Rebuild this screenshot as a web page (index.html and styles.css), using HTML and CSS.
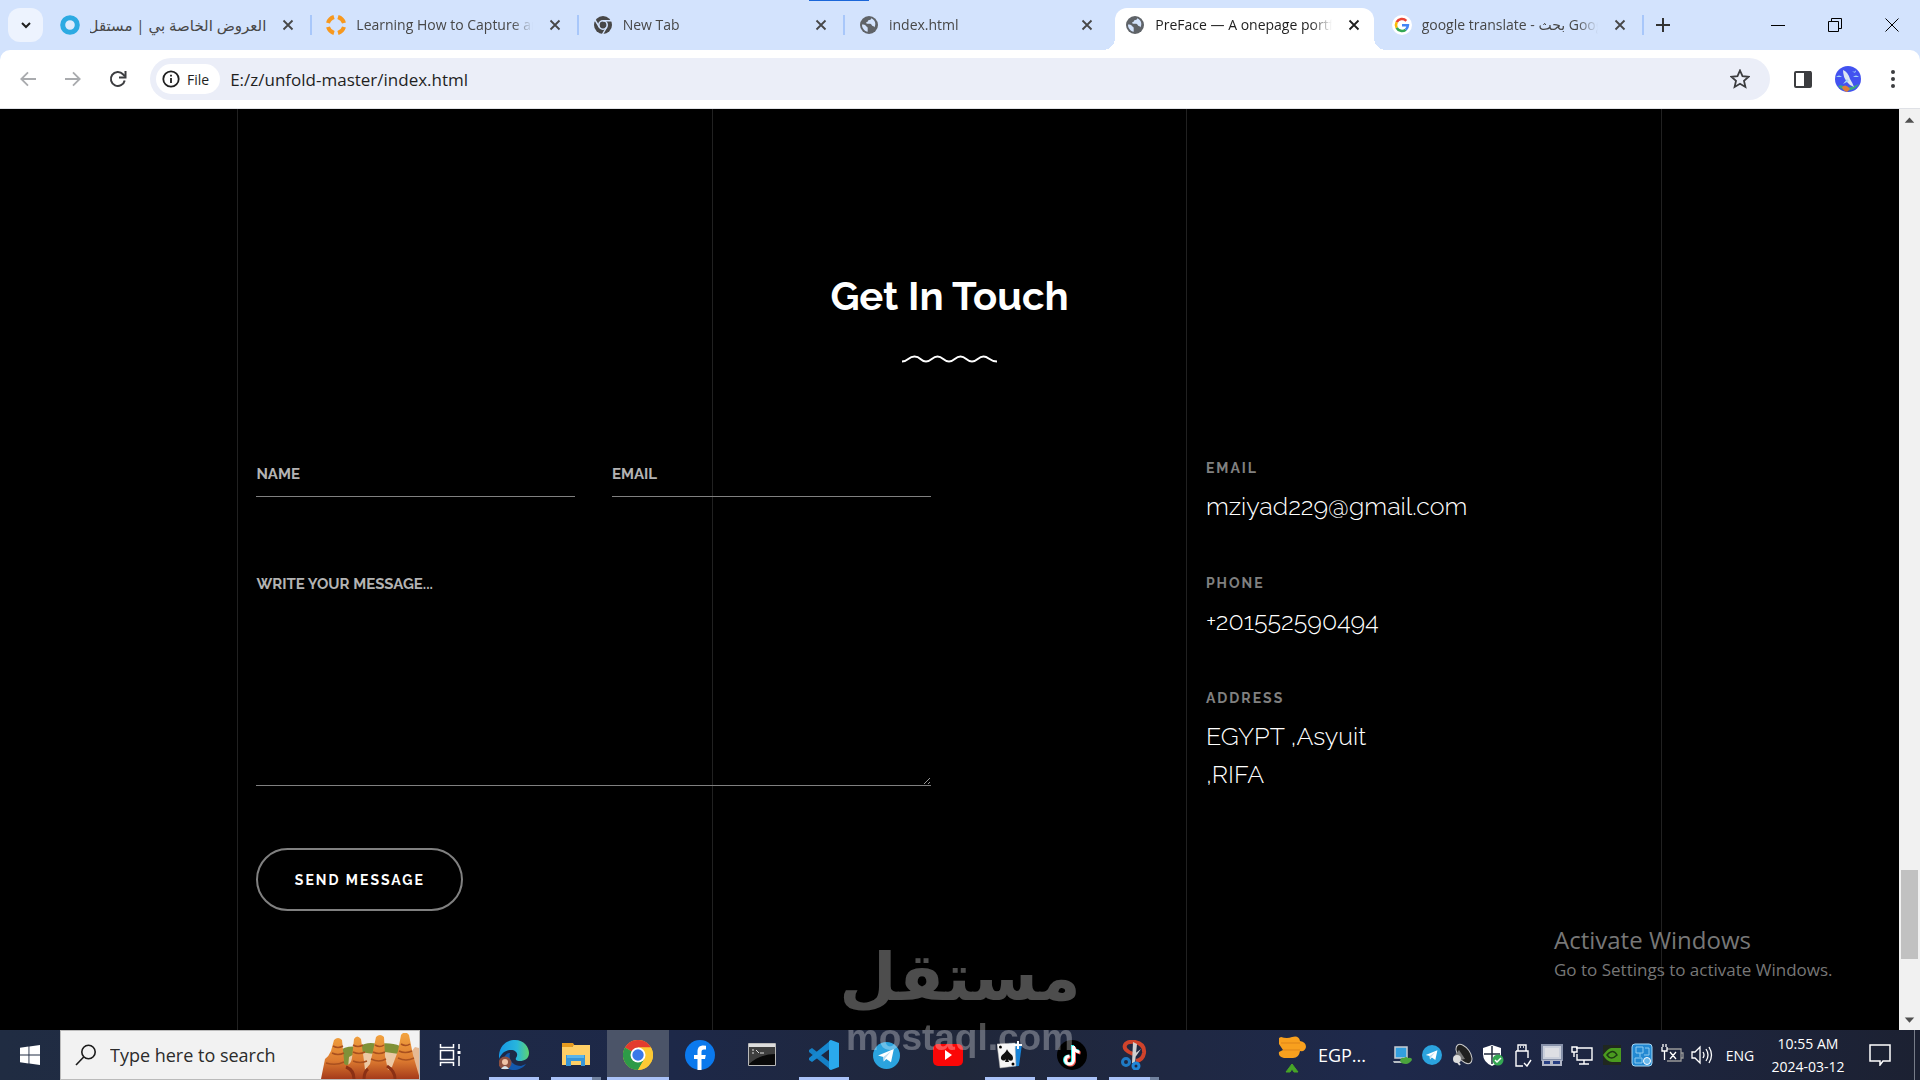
FILE: index.html
```html
<!DOCTYPE html>
<html lang="en">
<head>
  <meta charset="UTF-8">
  <title>PreFace — A onepage portfolio</title>
  <link rel="stylesheet" href="styles.css">
</head>
<body>

  <!-- shared icons -->
  <svg class="sprite" aria-hidden="true">
    <symbol id="i-close" viewBox="0 0 12 12"><path d="M1.500 1.500l9 9M10.500 1.500l-9 9" stroke="currentColor" stroke-width="1.800" fill="none"/></symbol>
    <symbol id="i-globe" viewBox="0 0 20 20">
      <circle cx="10" cy="10" r="9" fill="#5f6368"/>
      <path d="M3 9.500c1.500 0 3.500.3 4 1.500.4 1 1.700.6 1.700 1.900v3.800C5.500 16.200 2.900 13.300 3 9.500z" fill="#d3e3fd"/>
      <path d="M12.200 3.300c0 1.700-1.500 1.700-2.600 1.900-1 .2-.4 1.700-1.700 1.900-1.200.2-.8 1.600.4 1.700h3c1.400.2 1.200 1.900 2.400 2.100 1 .2 1.700.4 1.700 1.600 1.900-3.300 1-7.500-3.200-9.200z" fill="#d3e3fd"/>
    </symbol>
    <symbol id="i-telegram" viewBox="0 0 24 24">
      <circle cx="12" cy="12" r="12" fill="#2ba3de"/>
      <path d="M4.500 12L18.500 6.300 16 18l-4.200-3-2.200 2.300-.4-4z" fill="#fff"/>
      <path d="M9.200 13.300l6.800-5-5 6-1.400 3z" fill="#bcdcf0"/>
    </symbol>
  </svg>

  <header class="tab-strip">
    <button class="tab-search" aria-label="Search tabs">
      <svg width="12" height="12" viewBox="0 0 12 12"><path d="M2 4l4 4 4-4" fill="none" stroke="#1f1f1f" stroke-width="2"/></svg>
    </button>

    <nav class="tabs">
      <div class="tab">
        <svg class="favicon" viewBox="0 0 20 20"><circle cx="10" cy="10" r="7.300" fill="#dcebfd" stroke="#2caae2" stroke-width="5"/></svg>
        <a class="tab-title" href="#" dir="rtl" lang="ar">العروض الخاصة بي | مستقل</a>
        <button class="tab-close" aria-label="Close tab"><svg><use href="#i-close"/></svg></button>
      </div>
      <div class="tab">
        <svg class="favicon" viewBox="0 0 20 20"><g fill="none" stroke="#f7981d" stroke-width="4"><path d="M2 8a9 9 0 0 1 6-6M12 2a9 9 0 0 1 6 6M18 12a9 9 0 0 1-6 6M8 18a9 9 0 0 1-6-6"/></g></svg>
        <a class="tab-title" href="#">Learning How to Capture and Record</a>
        <button class="tab-close" aria-label="Close tab"><svg><use href="#i-close"/></svg></button>
      </div>
      <div class="tab">
        <svg class="favicon" viewBox="0 0 20 20"><circle cx="10" cy="10" r="9" fill="#474747"/><circle cx="10" cy="10" r="4.200" fill="none" stroke="#d3e3fd" stroke-width="1.600"/><path d="M10 5.800h8.500M6.300 12L2 4.800M13.700 12l-4.300 7.500" stroke="#d3e3fd" stroke-width="1.500"/></svg>
        <a class="tab-title" href="#">New Tab</a>
        <button class="tab-close" aria-label="Close tab"><svg><use href="#i-close"/></svg></button>
      </div>
      <div class="tab loading">
        <svg class="favicon"><use href="#i-globe"/></svg>
        <a class="tab-title" href="#">index.html</a>
        <button class="tab-close" aria-label="Close tab"><svg><use href="#i-close"/></svg></button>
      </div>
      <div class="tab active">
        <svg class="favicon"><use href="#i-globe"/></svg>
        <a class="tab-title" href="#">PreFace — A onepage portfolio</a>
        <button class="tab-close" aria-label="Close tab"><svg><use href="#i-close"/></svg></button>
      </div>
      <div class="tab">
        <svg class="favicon" viewBox="0 0 20 20"><circle cx="10" cy="10" r="10" fill="#fff"/><g fill="none" stroke-width="2.600"><path d="M4.700 7.200a6 6 0 0 1 9.600-1.400" stroke="#ea4335"/><path d="M4.700 7.200a6 6 0 0 0 0 5.600" stroke="#fbbc05"/><path d="M4.700 12.800a6 6 0 0 0 9 1.900" stroke="#34a853"/><path d="M13.700 14.700a6 6 0 0 0 2.200-4.400H10" stroke="#4285f4"/></g></svg>
        <a class="tab-title" href="#">google translate - بحث Google</a>
        <button class="tab-close" aria-label="Close tab"><svg><use href="#i-close"/></svg></button>
      </div>
    </nav>

    <button class="new-tab" aria-label="New tab">
      <svg width="14" height="14" viewBox="0 0 14 14"><path d="M7 0v14M0 7h14" stroke="#333" stroke-width="2"/></svg>
    </button>

    <div class="window-buttons">
      <button aria-label="Minimize"><svg width="14" height="14" viewBox="0 0 14 14"><path d="M0 7.500h14" stroke="#000"/></svg></button>
      <button aria-label="Restore"><svg width="14" height="14" viewBox="0 0 14 14"><path d="M.5 3.500h10v10H.5zM3.500 3.500v-3h10v10h-3" fill="none" stroke="#000"/></svg></button>
      <button aria-label="Close"><svg width="14" height="14" viewBox="0 0 14 14"><path d="M.5.5l13 13M13.500.5l-13 13" stroke="#000"/></svg></button>
    </div>
  </header>

  <div class="toolbar">
    <div class="nav-buttons">
      <button aria-label="Back"><svg width="16" height="16" viewBox="0 0 16 16"><path d="M16 8H1.500M8 1.300L1.300 8 8 14.700" fill="none" stroke="#a9abae" stroke-width="1.800"/></svg></button>
      <button aria-label="Forward"><svg width="16" height="16" viewBox="0 0 16 16"><path d="M0 8h14.500M8 1.300L14.700 8 8 14.700" fill="none" stroke="#a9abae" stroke-width="1.800"/></svg></button>
      <button aria-label="Reload"><svg width="18" height="18" viewBox="0 0 18 18"><path d="M15.700 10.500A7 7 0 1 1 14 4.200l2 2" fill="none" stroke="#3c3d40" stroke-width="2"/><path d="M16.500 1v6.500H10" fill="none" stroke="#3c3d40" stroke-width="2"/></svg></button>
    </div>
    <div class="address-bar">
      <button class="file-chip">
        <svg width="18" height="18" viewBox="0 0 18 18"><circle cx="9" cy="9" r="7.700" fill="none" stroke="#1f1f1f" stroke-width="1.800"/><path d="M9 8v5M9 4.700v1.800" stroke="#1f1f1f" stroke-width="1.800"/></svg>
        File
      </button>
      <input class="url" type="text" aria-label="Address" value="E:/z/unfold-master/index.html">
      <button class="icon-btn" aria-label="Bookmark"><svg width="20" height="20" viewBox="0 0 20 20"><path d="M10 1.500l2.500 5.700 6.200.6-4.700 4.100 1.400 6.100L10 14.800 4.600 18 6 11.900 1.300 7.800l6.200-.6z" fill="none" stroke="#3c3d40" stroke-width="1.800"/></svg></button>
    </div>
    <button class="icon-btn" aria-label="Side panel"><svg width="18" height="18" viewBox="0 0 18 18"><rect x="1" y="2" width="16" height="15" rx="1" fill="none" stroke="#3c3d40" stroke-width="2"/><path d="M10 1h7v16h-7z" fill="#3c3d40"/></svg></button>
    <button class="icon-btn" aria-label="Profile">
      <svg width="26" height="26" viewBox="0 0 26 26"><circle cx="13" cy="13" r="13" fill="#4252f0"/><path d="M3 20c3-2 5 0 9 1s7-1 12-3a13 13 0 0 1-21 2z" fill="#39a881"/><path d="M7 21q4-4 8 2l-3 3q-4-1-5-5z" fill="#e07b39"/><path d="M8 4q5 2 7 9 2 3 4 8-4-1-7-5-4-5-4-12z" fill="#dce6f2"/><path d="M12 13l-4 5 6-3zM1 11q3-3 6 0zM18 11q3-3 6 0zM17 5q3 2 4-1 0 5-4 1z" fill="#a4d4f5"/></svg>
    </button>
    <button class="icon-btn" aria-label="Menu"><svg width="18" height="18" viewBox="0 0 18 18" fill="#3c3d40"><circle cx="9" cy="2" r="2"/><circle cx="9" cy="9" r="2"/><circle cx="9" cy="16" r="2"/></svg></button>
  </div>

  <div class="viewport">
    <main class="page">
      <div class="grid-lines"><span></span><span></span><span></span></div>

      <section class="contact">
        <h2>Get In Touch</h2>
        <svg class="wave" width="96" height="10" viewBox="0 0 96 10"><path d="M0 7.500c6.500 0 6-5 12.500-5s6 5 11.500 5 6-5 11.500-5 6 5 11.500 5 6-5 11.500-5 6 5 11.500 5 6-5 11.500-5 6 5 13.500 5" fill="none" stroke="#fff" stroke-width="2"/></svg>

        <div class="contact-row">
          <form class="contact-form">
            <input type="text" id="name" aria-label="Name" placeholder="NAME">
            <input type="email" id="email" aria-label="Email" placeholder="EMAIL">
            <textarea id="message" aria-label="Write your message" placeholder="WRITE YOUR MESSAGE..."></textarea>
            <button type="submit" class="send">SEND MESSAGE</button>
          </form>

          <dl class="details">
            <dt>EMAIL</dt>
            <dd>mziyad229@gmail.com</dd>
            <dt>PHONE</dt>
            <dd>+201552590494</dd>
            <dt>ADDRESS</dt>
            <dd>EGYPT ,Asyuit<br>,RIFA</dd>
          </dl>
        </div>
      </section>
    </main>

    <div class="scrollbar">
      <svg viewBox="0 0 20 20"><path d="M5.500 13L10 8l4.500 5z" fill="#505050"/></svg>
      <span class="thumb"></span>
      <svg class="down" viewBox="0 0 20 20"><path d="M5.500 8l4.500 5 4.500-5z" fill="#505050"/></svg>
    </div>
  </div>

  <footer class="taskbar">
    <button class="start" aria-label="Start">
      <svg width="20" height="20" viewBox="0 0 20 20" fill="#fff"><path d="M0 2.800l8.500-1.200v8H0zM9.400 1.500L20 0v9.600H9.400zM0 10.500h8.500v8L0 17.300zM9.400 10.500H20V20L9.400 18.600z"/></svg>
    </button>
    <label class="search">
      <svg width="22" height="22" viewBox="0 0 22 22"><circle cx="13.500" cy="8" r="6.700" fill="none" stroke="#1b1b1b" stroke-width="1.600"/><path d="M8.700 13L1 21" stroke="#1b1b1b" stroke-width="1.600"/></svg>
      <input type="text" placeholder="Type here to search" aria-label="Search">
      <svg class="search-art" width="98" height="46" viewBox="0 0 98 46">
        <defs>
          <linearGradient id="rock" x1="0" y1="0" x2="0" y2="1"><stop offset="0" stop-color="#f3a540"/><stop offset=".6" stop-color="#dd7b30"/><stop offset="1" stop-color="#a53b1b"/></linearGradient>
        </defs>
        <path d="M5 40V28q4-9 12-9 8-7 20-5 10-6 19-3 14-2 23 2l8 8v20z" fill="#7f9138"/>
        <path d="M28 24q10-6 18-4t18-1l28 4v23H26z" fill="#ecc9a5"/>
        <path d="M88 46l2-27 4-5 4 1v31z" fill="#e6b892"/>
        <path d="M0 46l4-20q4-3 6-8l3-11q4-4 8 0l2 20q-1 5 3 5 4-1 5-7l2-19q3-5 7 0l3 22 1 9 5-6 3-13 3-14q4-4 8 0l1 19 3 14 4-3 6-16 3-16q4-5 8 0l4 20 7 24z" fill="url(#rock)"/>
        <g fill="none" stroke="#a9501f" stroke-width="1.500"><path d="M12 13q5 3 10 0M11 20q6 3 12 0M32 12q5 3 10 0M32 19q6 3 12 0M54 12q5 3 9 0M52 19q6 3 12 0M50 26q8 4 15 0M80 11q5 3 9 0M78 18q6 3 13 0M77 25q8 4 16 0M5 30q10 3 18-1M32 28q7 3 14 0"/><path d="M25 34q8 3 8 12M47 36q-4 3-4 10M66 33q8 5 8 13" stroke="#8b3014" stroke-width="3"/></g>
      </svg>
    </label>
    <button class="task-view" aria-label="Task view">
      <svg width="22" height="22" viewBox="0 0 22 22" fill="none" stroke="#fff" stroke-width="1.500"><path d="M1.500 0v3.500h13V0M1.500 22v-3.500h13V22M1.500 6.500h13v9h-13zM20 0v5M20 12v10"/><path d="M18.500 8.500h3" stroke-width="3"/></svg>
    </button>

    <nav class="apps">
      <button class="app running" aria-label="Edge">
        <svg width="30" height="30" viewBox="0 0 30 30"><defs><linearGradient id="edge" x1="0" y1="0" x2="1" y2="0"><stop offset="0" stop-color="#1597e5"/><stop offset=".6" stop-color="#28b6dc"/><stop offset="1" stop-color="#5ed470"/></linearGradient></defs><path d="M0 15C1 5 8 0 16 0c9 0 14 7 14 13 0 6-5 8-9 8-3 0-5-1-4-3 3-4 0-8-5-8-6 0-10 4-12 9z" fill="url(#edge)"/><path d="M11 13c-2 8 4 13 11 13l5-2c-3 4-8 6-12 6-8 0-12-7-10-12 1-3 3-5 6-5z" fill="#1359ae"/><circle cx="6" cy="23" r="6.500" fill="#8d5040"/><circle cx="6" cy="22" r="3" fill="#f0c2a6"/><path d="M2 29q4-6 8 0z" fill="#d9e3ea"/></svg>
      </button>
      <button class="app running grouped" aria-label="File Explorer">
        <svg width="28" height="26" viewBox="0 0 28 26"><path d="M0 1h11l2 3h-2L9 6H0z" fill="#e69b1f"/><path d="M0 5h10l2-2h16v20H0z" fill="#ffcf66"/><path d="M4 24V13h19v11h-4v-5H9v5z" fill="#3795d7"/><path d="M5 13h17v3H5z" fill="#5bb5ea"/></svg>
      </button>
      <button class="app running current" aria-label="Chrome">
        <svg width="30" height="30" viewBox="0 0 30 30"><circle cx="15" cy="15" r="15" fill="#fcc934"/><path d="M15 15L2 7.500A15 15 0 0 1 28 7.500H15z" fill="#e33b2e"/><path d="M2 7.500a15 15 0 0 0 13 22.500l6.500-11.300L15 15z" fill="#2d9a47"/><path d="M28 7.500H15l6.500 11.200L15 30A15 15 0 0 0 28 7.500z" fill="#fcc934"/><circle cx="15" cy="15" r="7.500" fill="#fff"/><circle cx="15" cy="15" r="5.700" fill="#3978e8"/></svg>
      </button>
      <button class="app" aria-label="Facebook">
        <svg width="30" height="30" viewBox="0 0 30 30"><circle cx="15" cy="15" r="15" fill="#0b79ed"/><path d="M12.500 30V19H9v-4h3.500v-3.500c0-4 2-6 6-6l2.500.3v3.700h-2c-2 0-2.500 1-2.500 2.500v3h4.300l-.8 4h-3.500v11z" fill="#fff"/></svg>
      </button>
      <button class="app" aria-label="Command Prompt">
        <svg width="28" height="24" viewBox="0 0 28 24"><path d="M.5.5h27v22H.5z" fill="#080808" stroke="#b9b9b9"/><path d="M1 1h26v3H1z" fill="#ddd"/><path d="M1 4h26v7Q12 11 1 21z" fill="#3e3e3e"/><path d="M4 7h2M4 10h2M8 7l3 3M12 10h4" stroke="#ddd"/></svg>
      </button>
      <button class="app running" aria-label="Visual Studio Code">
        <svg width="30" height="30" viewBox="0 0 30 30"><path d="M0 10l3-2 19 15v7L0 12z" fill="#1580c6"/><path d="M0 20l3 2L22 8V0L0 18z" fill="#1687cf"/><path d="M22 0l8 3v24l-8 3-2-1V1z" fill="#2aa9ed"/></svg>
      </button>
      <button class="app" aria-label="Telegram">
        <svg width="27" height="27"><use href="#i-telegram"/></svg>
      </button>
      <button class="app" aria-label="YouTube">
        <svg width="30" height="22" viewBox="0 0 30 22"><rect width="30" height="22" rx="5" fill="#fb0707"/><path d="M12 6l7 5-7 5z" fill="#fff"/></svg>
      </button>
      <button class="app running" aria-label="Solitaire">
        <svg width="26" height="28" viewBox="0 0 26 28"><path d="M12 2l13 1-3 22-9 1z" fill="#1783d8"/><path d="M0 3l18-1 1 23-16 2z" fill="#f6f6f6" stroke="#aaa" stroke-width=".5"/><path d="M10 8c2 5 6 5 6 9s-4 3-5 1l1 3H8l1-3c-2 3-6 1-5-2s5-4 6-8z" fill="#111"/><circle cx="3.500" cy="6" r="1.500"/><circle cx="16" cy="23" r="1.500"/><path d="M21 0v8M17 4h8" stroke="#fff" stroke-width="2"/></svg>
      </button>
      <button class="app running" aria-label="TikTok">
        <svg width="30" height="30" viewBox="0 0 30 30"><circle cx="15" cy="15" r="15" fill="#000"/><g fill="none" stroke-width="3"><path d="M15.500 5v15a4 4 0 1 1-4-4M15.500 5q0 5 6 6" stroke="#25f4ee"/><path d="M17.500 7v14a4 4 0 1 1-4-4M17.500 7q0 5 6 6" stroke="#fe5a50"/><path d="M16.500 6v14a4 4 0 1 1-4-4M16.500 6q0 5 6 6" stroke="#fff"/></g></svg>
      </button>
      <button class="app running grouped" aria-label="Snipping Tool">
        <svg width="26" height="30" viewBox="0 0 26 30"><path d="M12 14Q2 10 4 5q2-4 10-3 10 2 9 11-1 7-8 8" fill="none" stroke="#cf432b" stroke-width="4"/><path d="M12 2l4 2-2 19h-3zM20 9l-9 13 1-7z" fill="#d0d0d0"/><circle cx="5" cy="22" r="3.500" fill="none" stroke="#1f7bc5" stroke-width="3"/><circle cx="15" cy="26" r="3" fill="none" stroke="#1f86d8" stroke-width="3"/></svg>
      </button>
    </nav>

    <button class="news">
      <svg width="28" height="38" viewBox="0 0 28 38"><path d="M3 1q6 2 11 0 7-2 8 4 6 1 6 6-1 5-6 4-1 7-7 7H6q-6-1-5-6l4-2-4-6V2z" fill="#f8a01e"/><path d="M3 7h19M5 14h17" stroke="#dd8418"/><path d="M8 36l6-8 6 8h-4l-2-3-2 3z" fill="#47a527" stroke="#47a527"/></svg>
      EGP...
    </button>

    <div class="tray">
      <svg viewBox="0 0 24 24"><path d="M5 4h12v11H5z" fill="#339fdf" stroke="#c6cdd4" stroke-width="1.500"/><path d="M3 18h15l1 2H4z" fill="#b7bdc2"/><path d="M10 18q1-4 4-3 2-2 4 0 4-1 4 2-3 4-6 4-5 0-6-3z" fill="#4ba53c"/></svg>
      <svg viewBox="0 0 24 24"><use href="#i-telegram" x="2" y="2" width="20" height="20"/></svg>
      <svg viewBox="0 0 24 24"><ellipse cx="14" cy="11" rx="6" ry="11" transform="rotate(-35 14 11)" fill="#202020" stroke="#ccc"/><path d="M5 12l4-5 6 9-5 1z" fill="#777"/><circle cx="7" cy="16" r="4" fill="#ddd"/><path d="M7 18l3 4" stroke="#ddd" stroke-width="2"/></svg>
      <svg viewBox="0 0 24 24"><path d="M12 2l9 3v6q0 8-9 12-9-4-9-12V5z" fill="#fff"/><path d="M12 3v18M4 11h16" stroke="#222b3e" stroke-width="1.500"/><circle cx="18" cy="17" r="5.500" fill="#35a853"/><path d="M15 17l2 2 4-4" fill="none" stroke="#fff" stroke-width="1.500"/></svg>
      <svg viewBox="0 0 24 24" fill="none" stroke="#fff" stroke-width="1.400"><path d="M8 8V2h8v6M6 8h12v7M6 8v15h7M10 4h1M13 4h1M14 20l3 3 4-6"/></svg>
      <svg viewBox="0 0 24 24"><path d="M2 2h20v15H2z" fill="#cbd0dc" stroke="#8690a8" stroke-width="2"/><path d="M5 5h14v9H5z" fill="#dedfe4"/><path d="M2 17h20v6H2z" fill="#b2b7c7"/><path d="M4 18h6v3H4zM13 18h7v3h-7z" fill="#283f83"/></svg>
      <svg viewBox="0 0 24 24" fill="none" stroke="#fff" stroke-width="1.400"><path d="M6 5h16v12H7V11M14 17v4M9 21h10M2 4h5v5H2zM4 9v5"/></svg>
      <svg viewBox="0 0 24 24"><path d="M3 2h18v20H3z" fill="#20281f"/><path d="M3 12q6-8 9-7h9v14h-9q-5 0-9-7z" fill="#4a9b1f"/><path d="M7 12q6-7 10 0-6 6-10 0z" fill="none" stroke="#1d3b13" stroke-width="1.500"/></svg>
      <svg viewBox="0 0 24 24"><rect x="2" y="1" width="20" height="22" rx="3" fill="#2389d2" stroke="#a5d9f8"/><path d="M6 4h7v6H6zM10 10v4M15 5h4v7h-5M5 15h7v5H5z" fill="none" stroke="#8ecbf0"/><circle cx="17" cy="18" r="3.500" fill="#69b8ec" stroke="#fff"/></svg>
      <svg viewBox="0 0 24 24" fill="none" stroke="#fff" stroke-width="1.300"><path d="M7 6h14v12H7M21 10h2v5h-2" stroke="#999"/><path d="M2 4v4h5V4M3 4V1M6 4V1M4.500 8v9M10 9l6 7M16 9l-6 7"/></svg>
      <svg viewBox="0 0 24 24" fill="none" stroke="#fff" stroke-width="1.300"><path d="M2 9h3l5-5v16l-5-5H2zM13 9q2 3 0 6M16 6q4 6 0 12M19 4q5 8 0 16"/></svg>
    </div>
    <button class="lang">ENG</button>
    <button class="clock"><time>10:55 AM</time><time>2024-03-12</time></button>
    <button class="notifications" aria-label="Notifications"><svg width="22" height="22" viewBox="0 0 22 22"><path d="M1 1h20v16h-7l-3 4v-4H1z" fill="none" stroke="#fff" stroke-width="1.500"/></svg></button>
    <span class="show-desktop"></span>
  </footer>

  <div class="activate">
    <p class="activate-title">Activate Windows</p>
    <p class="activate-text">Go to Settings to activate Windows.</p>
  </div>

  <div class="brand">
    <span class="brand-ar" lang="ar" dir="rtl">مستقل</span>
    <span class="brand-en">mostaql.com</span>
  </div>

</body>
</html>
```
FILE: styles.css
```css
:root {
  --strip: #d3e3fd;
  --field: #ebeef8;
  --line: #212121;
  --muted: #808080;
  --ui: "Segoe UI", "Open Sans", "DejaVu Sans", sans-serif;
  --page: Raleway, Lato, sans-serif;
}

* { box-sizing: border-box; }

body {
  margin: 0;
  height: 100vh;
  display: flex;
  flex-direction: column;
  position: relative;
  overflow: hidden;
  font-family: var(--ui);
  background: #000;
}
button {
  padding: 0;
  border: 0;
  background: none;
  color: inherit;
  font: inherit;
  display: flex;
  align-items: center;
  justify-content: center;
}
input, textarea {
  border: 0;
  outline: 0;
  background: none;
  min-width: 0;
}
svg { display: block; flex: none; }
.sprite { position: absolute; width: 0; height: 0; }

/* ---- tab strip ---- */
/* runs 10px under the toolbar so its rounded corners show the strip colour */
.tab-strip {
  height: 60px;
  margin-bottom: -10px;
  flex: none;
  display: flex;
  align-items: center;
  padding: 0 0 10px 8px;
  background: var(--strip);
  color: #474747;
  font-size: 14px;
}
.tab-search {
  width: 35px;
  height: 34px;
  margin-right: 3px;
  border-radius: 12px;
  background: #edf3fe;
}
.tabs {
  flex: 0 1 1598px;
  display: flex;
  align-self: stretch;
  min-width: 0;
}
.tab {
  flex: 1 1 0;
  min-width: 0;
  display: flex;
  align-items: center;
  padding: 0 14px;
  position: relative;
}
.tab::after {
  content: "";
  position: absolute;
  right: 0;
  top: 15px;
  width: 2px;
  height: 20px;
  background: #a8c7fa;
}
.tab.loading::after { display: none; }
.favicon {
  width: 20px;
  height: 20px;
  margin-right: 10px;
}
.tab-title {
  flex: 1;
  color: inherit;
  text-decoration: none;
  white-space: nowrap;
  overflow: hidden;
  line-height: 24px;
  -webkit-mask-image: linear-gradient(to right, #000 88%, transparent);
  mask-image: linear-gradient(to right, #000 88%, transparent);
}
.tab-title[dir="rtl"] {
  font-size: 15px;
  -webkit-mask-image: none;
  mask-image: none;
}
.tab-close { width: 20px; height: 20px; margin-left: 12px; }
.tab-close svg { width: 12px; height: 12px; }
.tab.active {
  color: #1f1f1f;
  background: #fff;
  margin: 8px 4px 0;
  padding: 0 10px 8px;
  border-radius: 12px 12px 0 0;
}
.tab.active::before, .tab.active::after {
  content: "";
  position: absolute;
  top: auto;
  bottom: 0;
  width: 12px;
  height: 12px;
}
.tab.active::before {
  left: -12px;
  background: radial-gradient(circle at 0 0, transparent 12px, #fff 12px);
}
.tab.active::after {
  right: -12px;
  background: radial-gradient(circle at 100% 0, transparent 12px, #fff 12px);
}
.tab.loading::before {
  content: "";
  position: absolute;
  top: 0;
  left: -36px;
  width: 60px;
  height: 1px;
  background: #1a66d9;
}
.new-tab { width: 38px; height: 34px; }
.window-buttons {
  margin-left: auto;
  align-self: stretch;
  display: flex;
}
.window-buttons button { width: 57px; }

/* ---- toolbar ---- */
.toolbar {
  height: 59px;
  flex: none;
  display: flex;
  align-items: center;
  padding: 0 5px;
  position: relative;
  background: #fff;
  border-bottom: 1px solid #dfe1e6;
  border-radius: 10px 10px 0 0;
}
.nav-buttons { display: flex; margin-right: 10px; }
.nav-buttons button { width: 45px; height: 40px; }
.address-bar {
  flex: 1;
  height: 42px;
  display: flex;
  align-items: center;
  padding: 0 16px 0 6px;
  margin-right: 10px;
  border-radius: 21px;
  background: var(--field);
}
.file-chip {
  height: 30px;
  padding: 0 11px 0 6px;
  gap: 7px;
  border-radius: 15px;
  background: #fff;
  color: #1f1f1f;
  font-size: 14px;
}
.url {
  flex: 1;
  padding: 0 0 0 10px;
  color: #1f1f1f;
  font: 17px var(--ui);
}
.icon-btn { width: 45px; height: 40px; }
.address-bar .icon-btn { width: 28px; }

/* ---- page ---- */
.viewport {
  flex: 1;
  min-height: 0;
  display: flex;
}
.page {
  flex: 1;
  position: relative;
  overflow: hidden;
  background: #000;
  color: #fff;
  font-family: var(--page);
}
.grid-lines {
  position: absolute;
  inset: 0 12.5%;
  display: flex;
  border-left: 1px solid var(--line);
}
.grid-lines span {
  flex: 1;
  border-right: 1px solid var(--line);
}
.contact {
  position: relative;
  padding: 163px 12.5% 0;
}
.contact h2 {
  margin: 0;
  text-align: center;
  font-size: 40px;
  font-weight: 700;
  line-height: 48px;
}
.wave { margin: 34px auto 0; }
.contact-row {
  display: grid;
  grid-template-columns: 2fr 1fr;
  margin-top: 88px;
}
.contact-form {
  width: 75%;
  padding: 0 19px;
  display: grid;
  grid-template-columns: 1fr 1fr;
  column-gap: 37px;
  justify-items: start;
  align-content: start;
}
.contact-form input, .contact-form textarea {
  width: 100%;
  padding: 0;
  border-bottom: 1px solid var(--muted);
  color: #fff;
  font: 700 15px/24px var(--page);
}
.contact-form input { height: 45px; }
.contact-form textarea {
  grid-column: 1 / -1;
  height: 214px;
  margin-top: 75px;
  resize: vertical;
  color-scheme: dark;
}
.contact-form ::placeholder { color: #b3b3b3; opacity: 1; }
.send {
  width: 207px;
  height: 63px;
  margin-top: 62px;
  border: 2px solid var(--muted);
  border-radius: 32px;
  font-size: 14px;
  font-weight: 700;
  letter-spacing: 2px;
}
.details { margin: 4px 0 0; padding-left: 19px; }
.details dt {
  color: var(--muted);
  font-size: 14px;
  font-weight: 700;
  line-height: 24px;
  letter-spacing: 2px;
}
.details dd {
  margin: 7px 0 46px;
  font-size: 25px;
  font-weight: 300;
  line-height: 38px;
}

.scrollbar {
  width: 21px;
  display: grid;
  grid-template-rows: 21px 740fr 89px 50fr 21px;
  background: #f1f1f1;
}
.scrollbar svg { width: 21px; height: 21px; }
.thumb {
  grid-row: 3;
  margin: 0 2px;
  background: #c1c1c1;
}
.scrollbar .down { grid-row: 5; }

/* ---- taskbar ---- */
.taskbar {
  height: 50px;
  flex: none;
  display: flex;
  align-items: stretch;
  background: linear-gradient(90deg, #202c42, #1d2848 35%, #20273a 50%, #1e294b 72%, #1c2132);
  color: #fff;
  font-size: 18px;
}
.start { width: 60px; }
.search {
  width: 360px;
  display: flex;
  align-items: center;
  padding-left: 14px;
  overflow: hidden;
  background: #f2f2f2;
  border: 1px solid #bbb;
}
.search input {
  flex: 1;
  padding: 0 0 0 13px;
  font: 18px var(--ui);
}
.search input::placeholder { color: #2b2b2b; opacity: 1; }
.search-art { align-self: flex-end; }
.task-view { width: 63px; padding-right: 4px; }
.apps { display: flex; }
.app { width: 62px; position: relative; }
.app.running::after {
  content: "";
  position: absolute;
  left: 6px;
  right: 6px;
  bottom: 0;
  height: 3px;
  background: #a9c2f8;
}
.app.grouped::after {
  background: linear-gradient(90deg, #a9c2f8 41px, #71829f 41px);
}
.app.current { background: #4b5468; }
.app.current::after { left: 0; right: 0; }
.news { margin-left: auto; gap: 12px; }
.tray {
  display: flex;
  align-items: center;
  gap: 6px;
  margin-left: 24px;
}
.tray svg { width: 24px; height: 24px; }
.lang {
  width: 52px;
  font-size: 14px;
}
.clock {
  width: 84px;
  flex-direction: column;
  font-size: 14px;
  line-height: 23px;
}
.notifications { width: 60px; }
.show-desktop {
  width: 6px;
  margin-left: 4px;
  border-left: 1px solid #777c88;
}

/* ---- overlays ---- */
.activate {
  position: absolute;
  right: 81px;
  bottom: 96px;
  width: 285px;
  color: #777;
  white-space: nowrap;
}
.activate p { margin: 0; }
.activate-title { font-size: 24px; line-height: 32px; }
.activate-text { font-size: 17px; line-height: 28px; }

.brand {
  position: absolute;
  left: 50%;
  bottom: 22px;
  transform: translateX(-50%);
  display: flex;
  flex-direction: column;
  align-items: center;
  color: #fff;
  opacity: .3;
  pointer-events: none;
}
.brand-ar {
  font: 700 66px/80px "DejaVu Sans", sans-serif;
}
.brand-en {
  font: 700 37px/40px "Liberation Sans", sans-serif;
}
```
